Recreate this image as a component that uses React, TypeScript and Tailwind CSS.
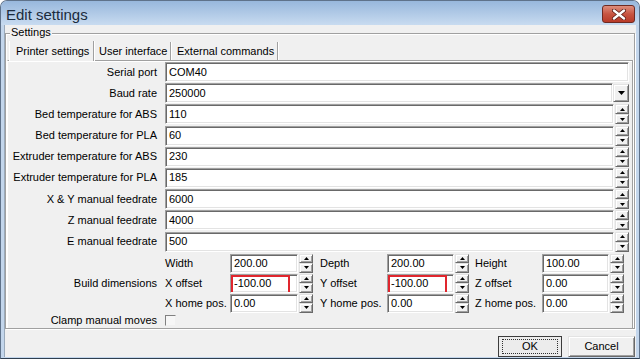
import React from 'react'

const sunken =
  'bg-white border border-t-[#a0a0a0] border-l-[#a0a0a0] border-b-white border-r-white shadow-[inset_1px_1px_0_#696969,inset_-1px_-1px_0_#e3e3e3] pl-[3px] flex items-center text-black overflow-hidden whitespace-nowrap'

const raised =
  'bg-[#f0f0f0] border border-t-[#e3e3e3] border-l-[#e3e3e3] border-b-[#696969] border-r-[#696969] shadow-[inset_1px_1px_0_#fff,inset_-1px_-1px_0_#a0a0a0]'

function Tri({ up }: { up?: boolean }) {
  return (
    <svg width="5" height="3" viewBox="0 0 5 3" className="block">
      <polygon points={up ? '2.5,0 5,3 0,3' : '0,0 5,0 2.5,3'} fill="#000" />
    </svg>
  )
}

function Spinner() {
  return (
    <div className="flex flex-col w-[14px] h-full ml-[1px] shrink-0">
      <div className={`${raised} flex-1 flex items-center justify-center`}>
        <Tri up />
      </div>
      <div className={`${raised} flex-1 flex items-center justify-center`}>
        <Tri />
      </div>
    </div>
  )
}

type Kind = 'text' | 'combo' | 'spin'

const rows: { label: string; value: string; kind: Kind }[] = [
  { label: 'Serial port', value: 'COM40', kind: 'text' },
  { label: 'Baud rate', value: '250000', kind: 'combo' },
  { label: 'Bed temperature for ABS', value: '110', kind: 'spin' },
  { label: 'Bed temperature for PLA', value: '60', kind: 'spin' },
  { label: 'Extruder temperature for ABS', value: '230', kind: 'spin' },
  { label: 'Extruder temperature for PLA', value: '185', kind: 'spin' },
  { label: 'X & Y manual feedrate', value: '6000', kind: 'spin' },
  { label: 'Z manual feedrate', value: '4000', kind: 'spin' },
  { label: 'E manual feedrate', value: '500', kind: 'spin' },
]

const build = [
  [
    { label: 'Width', value: '200.00' },
    { label: 'Depth', value: '200.00' },
    { label: 'Height', value: '100.00' },
  ],
  [
    { label: 'X offset', value: '-100.00', mark: true },
    { label: 'Y offset', value: '-100.00', mark: true },
    { label: 'Z offset', value: '0.00' },
  ],
  [
    { label: 'X home pos.', value: '0.00' },
    { label: 'Y home pos.', value: '0.00' },
    { label: 'Z home pos.', value: '0.00' },
  ],
]

function Field({ kind, value }: { kind: Kind; value: string }) {
  return (
    <div className="flex flex-1 h-[20px] ml-[8px]">
      <div className={`${sunken} flex-1`}>{value}</div>
      {kind === 'spin' && <Spinner />}
      {kind === 'combo' && (
        <div className={`${raised} w-[16px] h-[18px] mt-[1px] flex items-center justify-center shrink-0`}>
          <svg width="7" height="4" viewBox="0 0 7 4" className="block">
            <polygon points="0,0 7,0 3.5,4" fill="#000" />
          </svg>
        </div>
      )}
    </div>
  )
}

export default function App() {
  return (
    <div className="w-[640px] h-[359px] flex flex-col overflow-hidden rounded-t-[7px] border border-[#5f728a] border-b-[#2f3f50] bg-[#c3d6ec] font-['Liberation_Sans','Noto_Sans',sans-serif] text-[11px] text-black leading-none">
      {/* title bar */}
      <div className="h-[24px] shrink-0 flex items-center justify-between pl-[5px] pr-[4px] bg-gradient-to-b from-[#98b7dc] to-[#c8dbf0]">
        <span className="text-[15px] text-[#1b2b3d] mt-[2px]">Edit settings</span>
        <div className="w-[33px] h-[18px] mt-[2px] rounded-[3px] border border-[#6e2a22] bg-gradient-to-b from-[#dd8d7d] via-[#c75441] to-[#b83a28] flex items-center justify-center">
          <svg width="14" height="11" viewBox="0 0 14 11" className="block">
            <path d="M2 1.5 L12 9.5 M12 1.5 L2 9.5" stroke="#5a1d16" strokeWidth="4" strokeLinecap="round" />
            <path d="M2 1.5 L12 9.5 M12 1.5 L2 9.5" stroke="#fff" strokeWidth="2.4" strokeLinecap="round" />
          </svg>
        </div>
      </div>

      {/* client area */}
      <div className="h-[332px] mx-[3px] bg-[#f0f0f0] flex flex-col border-l border-[#9aaabb]">
        {/* group box */}
        <div className="relative mt-[8px] mr-[1px] h-[297px] border border-[#a0a0a0] shadow-[inset_1px_1px_0_#fff,1px_1px_0_#fff] flex flex-col pt-[7px] pl-[1px] pr-[1px]">
          <span className="absolute -top-[7px] left-[4px] bg-[#f0f0f0] px-[1px] whitespace-nowrap">Settings</span>

          {/* tabs */}
          <div className="flex h-[19px] pl-[2px] shrink-0 items-end whitespace-nowrap">
            <div className="relative z-10 h-[20px] -mb-[1px] w-[85px] pl-[6px] flex items-center bg-[#f0f0f0] border-l border-white border-r border-r-[#a0a0a0] shadow-[1px_0_0_#fff]">
              Printer settings
            </div>
            <div className="h-[18px] w-[77px] pl-[5px] flex items-center border-r border-[#a0a0a0] shadow-[1px_0_0_#fff]">
              User interface
            </div>
            <div className="h-[18px] w-[107px] pl-[6px] flex items-center border-r border-[#a0a0a0] shadow-[1px_0_0_#fff]">
              External commands
            </div>
          </div>

          {/* tab panel */}
          <div className="flex-1 border-t border-l border-r border-t-[#a0a0a0] border-l-white border-r-[#a0a0a0] shadow-[inset_0_1px_0_#fff,1px_0_0_#fff] pt-[1px] pr-[3px] flex flex-col">
            {rows.map((r) => (
              <div key={r.label} className="flex items-start h-[21.2px] shrink-0">
                <div className="w-[149px] h-[20px] flex items-center justify-end whitespace-nowrap">{r.label}</div>
                <Field kind={r.kind} value={r.value} />
              </div>
            ))}

            {/* build dimensions */}
            <div className="flex mt-[1px]">
              <div className="w-[149px] flex items-center justify-end whitespace-nowrap">Build dimensions</div>
              <div className="flex flex-col ml-[8px]">
                {build.map((line, i) => (
                  <div key={i} className="flex h-[20px] items-start">
                    {line.map((c, j) => (
                      <div key={c.label} className={`flex h-[19px] ${j === 0 ? '' : j === 1 ? 'ml-[7px]' : 'ml-[6px]'}`}>
                        <div className={`${j === 0 ? 'w-[65px]' : 'w-[67px]'} flex items-center whitespace-nowrap`}>{c.label}</div>
                        <div className={`relative ${sunken} ${j === 0 ? 'w-[68px]' : 'w-[67px]'}`}>
                          {c.value}
                          {c.mark && (
                            <div className="absolute left-0 top-0 w-[59px] h-[19px] border-2 border-[#e0262e]" />
                          )}
                        </div>
                        <Spinner />
                      </div>
                    ))}
                  </div>
                ))}
              </div>
            </div>

            {/* clamp */}
            <div className="flex h-[14px] items-center">
              <div className="w-[149px] flex items-center justify-end whitespace-nowrap">Clamp manual moves</div>
              <div className="ml-[8px] w-[11px] h-[11px] bg-[#f6f6f6] border border-t-[#808080] border-l-[#808080] border-b-[#f0f0f0] border-r-[#f0f0f0]" />
            </div>
          </div>
        </div>

        {/* buttons */}
        <div className="flex justify-end gap-[6px] mt-[7px] mr-[1px]">
          <div className="w-[64px] h-[21px] border border-[#3c3c3c] bg-[#ececec] flex items-center justify-center">
            <div className="w-[56px] h-[15px] border border-dotted border-[#303030] flex items-center justify-center">OK</div>
          </div>
          <div className={`${raised} w-[67px] h-[21px] flex items-center justify-center`}>Cancel</div>
        </div>
      </div>
    </div>
  )
}
